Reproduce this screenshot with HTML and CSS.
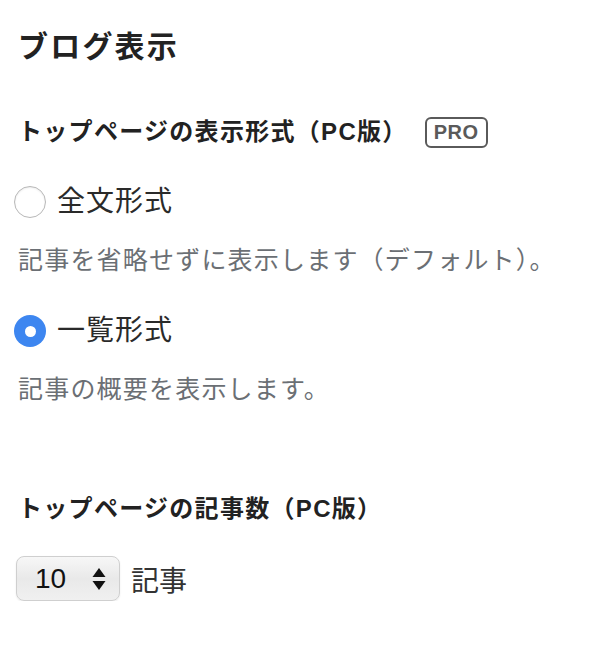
FILE: index.html
```html
<!DOCTYPE html>
<html lang="ja">
<head>
<meta charset="utf-8">
<link rel="stylesheet" href="styles.css">
</head>
<body>
<div class="page">
  <h1 class="title">ブログ表示</h1>

  <div class="label-row">
    <span class="label">トップページの表示形式（PC版）</span>
    <span class="badge">PRO</span>
  </div>

  <label class="radio-row first">
    <span class="radio"></span>
    <span class="radio-text">全文形式</span>
  </label>
  <p class="desc desc-first">記事を省略せずに表示します（デフォルト）。</p>

  <label class="radio-row second">
    <span class="radio checked"></span>
    <span class="radio-text">一覧形式</span>
  </label>
  <p class="desc desc-second">記事の概要を表示します。</p>

  <div class="label-row count-label">
    <span class="label">トップページの記事数（PC版）</span>
  </div>

  <div class="select-row">
    <span class="select">
      <span class="select-value">10</span>
      <svg class="arrows" width="14" height="24" viewBox="0 0 14 24"><path d="M7 1 L13.5 10 H0.5 Z" fill="#111"/><path d="M7 23 L13.5 14 H0.5 Z" fill="#111"/></svg>
    </span>
    <span class="select-unit">記事</span>
  </div>
</div>
</body>
</html>
```

FILE: styles.css
```css
html, body {
  margin: 0;
  padding: 0;
  background: #ffffff;
}
body {
  font-family: "Liberation Sans", "Noto Sans CJK JP", sans-serif;
  color: #222;
}
.page {
  display: flex;
  flex-direction: column;
  align-items: flex-start;
  padding: 30px 0 0 18px;
}
.title {
  margin: 0;
  font-size: 30px;
  line-height: 34px;
  font-weight: 700;
  letter-spacing: 2.2px;
  color: #222;
}
.label-row {
  display: flex;
  align-items: center;
  margin-top: 51px;
  height: 34px;
}
.label {
  font-size: 24px;
  font-weight: 700;
  letter-spacing: 1.3px;
  color: #222;
  line-height: 34px;
}
.badge {
  margin-left: 17px;
  border: 2px solid #5a5a5a;
  border-radius: 6px;
  color: #5a5a5a;
  font-size: 20px;
  font-weight: 700;
  line-height: 27px;
  padding: 0 7px;
  letter-spacing: 0.5px;
}
.radio-row {
  display: flex;
  align-items: center;
  margin-left: -4px;
  height: 36px;
}
.radio-row.first { margin-top: 35px; }
.radio-row.second { margin-top: 38px; }
.radio {
  box-sizing: border-box;
  width: 32px;
  height: 32px;
  border-radius: 50%;
  border: 1.5px solid #b8b8b8;
  background: #fff;
  box-shadow: inset 0 1px 2px rgba(0,0,0,0.08);
  display: flex;
  align-items: center;
  justify-content: center;
}
.radio.checked {
  border: none;
  background: #3d86f0;
  box-shadow: none;
}
.radio.checked::after {
  content: "";
  width: 11px;
  height: 11px;
  border-radius: 50%;
  background: #fff;
}
.radio-text {
  margin-left: 11px;
  font-size: 28px;
  letter-spacing: 1px;
  line-height: 36px;
  color: #2a2a2a;
}
.desc {
  margin: 25px 0 0 0;
  font-size: 25px;
  line-height: 30px;
  letter-spacing: 1.2px;
  color: #6b6f74;
}
.desc-second {
  margin-top: 25px;
}
.count-label {
  margin-top: 88px;
}
.select-row {
  display: flex;
  align-items: center;
  margin-top: 30px;
  margin-left: -2px;
}
.select {
  box-sizing: border-box;
  width: 104px;
  height: 45px;
  border: 1px solid #cfcfcf;
  border-radius: 8px;
  background: linear-gradient(#f7f7f7, #e9e9e9 50%, #f0f0f0);
  box-shadow: 0 1px 2px rgba(0,0,0,0.08);
  display: flex;
  align-items: center;
  padding: 0 13px 0 18px;
}
.select-value {
  flex: 1;
  font-size: 28px;
  color: #111;
  font-family: "Liberation Sans", sans-serif;
}
.select-unit {
  margin-left: 11px;
  font-size: 28px;
  color: #333;
}
```
